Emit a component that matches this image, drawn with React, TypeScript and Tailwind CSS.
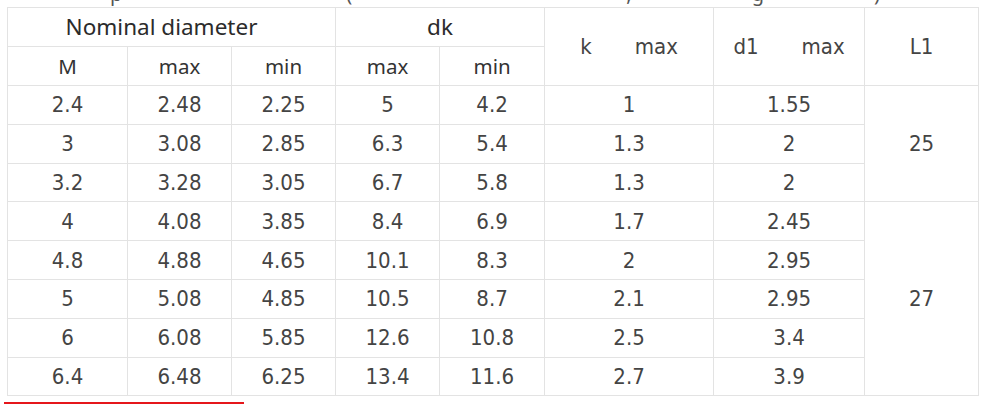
import React from "react";

const rows = [
  { m: "2.4", max: "2.48", min: "2.25", dkMax: "5", dkMin: "4.2", k: "1", d1: "1.55" },
  { m: "3", max: "3.08", min: "2.85", dkMax: "6.3", dkMin: "5.4", k: "1.3", d1: "2" },
  { m: "3.2", max: "3.28", min: "3.05", dkMax: "6.7", dkMin: "5.8", k: "1.3", d1: "2" },
  { m: "4", max: "4.08", min: "3.85", dkMax: "8.4", dkMin: "6.9", k: "1.7", d1: "2.45" },
  { m: "4.8", max: "4.88", min: "4.65", dkMax: "10.1", dkMin: "8.3", k: "2", d1: "2.95" },
  { m: "5", max: "5.08", min: "4.85", dkMax: "10.5", dkMin: "8.7", k: "2.1", d1: "2.95" },
  { m: "6", max: "6.08", min: "5.85", dkMax: "12.6", dkMin: "10.8", k: "2.5", d1: "3.4" },
  { m: "6.4", max: "6.48", min: "6.25", dkMax: "13.4", dkMin: "11.6", k: "2.7", d1: "3.9" },
];

// L1 is merged: first three rows share 25, the rest share 27
const l1Spans: Record<number, { value: string; span: number }> = {
  0: { value: "25", span: 3 },
  3: { value: "27", span: 5 },
};

const cell = "border border-[#e3e3e3] text-center align-middle p-0 font-normal";
const head = `${cell} font-[family-name:Noto_Sans,sans-serif] text-[22.5px] text-[#2b2b2b]`;
const sub = `${cell} font-[family-name:Noto_Sans,sans-serif] text-[20.5px] text-[#333]`;
const num = `${cell} font-[family-name:'DejaVu_Sans_Condensed','DejaVu_Sans',sans-serif] font-stretch-condensed text-[22px] text-[#444]`;

const App = () => {
  return (
    <div className="h-[404px] w-[985px] overflow-hidden bg-white">
      {/* caption line above, cut off by the crop */}
      <div className="h-[7px] overflow-hidden">
        <div className="-mt-[16px] flex font-[family-name:Noto_Sans,sans-serif] text-[20px] leading-[20px] text-[#555]">
          <span className="ml-[110px]">p</span>
          <span className="ml-[224px]">(</span>
          <span className="ml-[274px]">,</span>
          <span className="ml-[120px]">g</span>
          <span className="ml-[110px]">)</span>
        </div>
      </div>

      <table className="ml-[7px] w-[971px] table-fixed border-collapse">
        <colgroup>
          <col className="w-[120px]" />
          <col className="w-[104px]" />
          <col className="w-[104px]" />
          <col className="w-[104px]" />
          <col className="w-[105px]" />
          <col className="w-[169px]" />
          <col className="w-[151px]" />
          <col className="w-[114px]" />
        </colgroup>
        <thead>
          <tr className="h-[39px]">
            <th colSpan={3} className={`${head} pr-[20px]`}>
              Nominal diameter
            </th>
            <th colSpan={2} className={head}>
              dk
            </th>
            <th rowSpan={2} className={num}>
              <div className="flex justify-center gap-[43px]">
                <span>k</span>
                <span>max</span>
              </div>
            </th>
            <th rowSpan={2} className={num}>
              <div className="flex justify-center gap-[43px]">
                <span>d1</span>
                <span>max</span>
              </div>
            </th>
            <th rowSpan={2} className={num}>
              L1
            </th>
          </tr>
          <tr className="h-[39px]">
            <th className={sub}>M</th>
            <th className={sub}>max</th>
            <th className={sub}>min</th>
            <th className={sub}>max</th>
            <th className={sub}>min</th>
          </tr>
        </thead>
        <tbody>
          {rows.map((r, i) => (
            <tr key={r.m} className="h-[38.8px]">
              <td className={num}>{r.m}</td>
              <td className={num}>{r.max}</td>
              <td className={num}>{r.min}</td>
              <td className={num}>{r.dkMax}</td>
              <td className={num}>{r.dkMin}</td>
              <td className={num}>{r.k}</td>
              <td className={num}>{r.d1}</td>
              {l1Spans[i] && (
                <td rowSpan={l1Spans[i].span} className={num}>
                  {l1Spans[i].value}
                </td>
              )}
            </tr>
          ))}
        </tbody>
      </table>

      <div className="ml-[4px] mt-[6px] h-[4px] w-[240px] bg-[#e5161b]" />
    </div>
  );
};

export default App;
